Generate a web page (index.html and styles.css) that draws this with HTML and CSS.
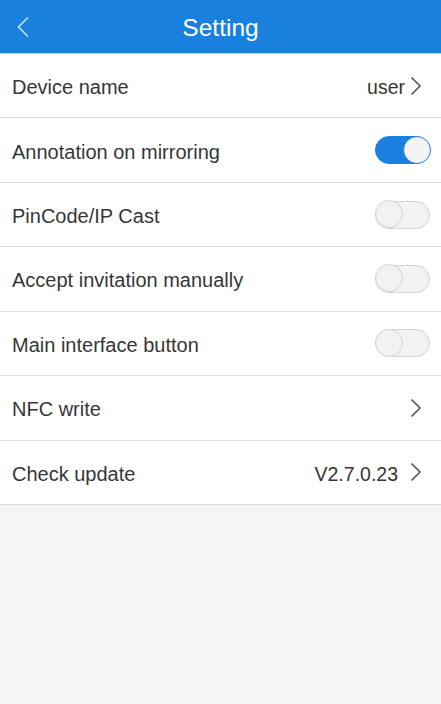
FILE: index.html
```html
<!DOCTYPE html>
<html>
<head>
<meta charset="utf-8">
<link rel="stylesheet" href="styles.css">
</head>
<body>
<div class="app">
  <header class="topbar">
    <svg class="back" width="14" height="22" viewBox="0 0 14 22"><path d="M12 1.5 L2.5 11 L12 20.5" fill="none" stroke="#cfe3f8" stroke-width="1.6"/></svg>
    <div class="title">Setting</div>
  </header>
  <div class="list">
    <div class="row"><span class="label">Device name</span><span class="right"><span class="value">user</span><svg class="chev" width="12" height="20" viewBox="0 0 12 20"><path d="M1.5 1.5 L10 10 L1.5 18.5" fill="none" stroke="#555" stroke-width="1.6"/></svg></span></div>
    <div class="row"><span class="label">Annotation on mirroring</span><span class="toggle on"><span class="knob"></span></span></div>
    <div class="row"><span class="label">PinCode/IP Cast</span><span class="toggle"><span class="knob"></span></span></div>
    <div class="row"><span class="label">Accept invitation manually</span><span class="toggle"><span class="knob"></span></span></div>
    <div class="row"><span class="label">Main interface button</span><span class="toggle"><span class="knob"></span></span></div>
    <div class="row"><span class="label">NFC write</span><span class="right"><svg class="chev" width="12" height="20" viewBox="0 0 12 20"><path d="M1.5 1.5 L10 10 L1.5 18.5" fill="none" stroke="#555" stroke-width="1.6"/></svg></span></div>
    <div class="row"><span class="label">Check update</span><span class="right"><span class="value ver">V2.7.0.23</span><svg class="chev" width="12" height="20" viewBox="0 0 12 20"><path d="M1.5 1.5 L10 10 L1.5 18.5" fill="none" stroke="#555" stroke-width="1.6"/></svg></span></div>
  </div>
</div>
</body>
</html>
```
FILE: styles.css
```css
* { box-sizing: border-box; }
html, body { margin: 0; padding: 0; }
body {
  background: #f5f5f5;
  font-family: "Liberation Sans", Arial, sans-serif;
  width: 441px;
  height: 704px;
  overflow: hidden;
}
.topbar {
  height: 54px;
  background: #1a80de;
  border-bottom: 1px solid #c9d6f0;
  position: relative;
  display: flex;
  align-items: center;
  justify-content: center;
}
.back {
  position: absolute;
  left: 16px;
  top: 16px;
}
.title {
  color: #fff;
  font-size: 24.5px;
  margin-top: 2px;
}
.list { background: #fff; }
.row {
  height: 64.43px;
  border-bottom: 1px solid #dcdcdc;
  display: flex;
  align-items: center;
  justify-content: space-between;
  padding: 0 11px 0 12px;
}
.label {
  font-size: 20px;
  color: #363636;
  padding-top: 4px;
}
.right {
  display: flex;
  align-items: center;
  gap: 5px;
}
.value {
  font-size: 19.5px;
  color: #363636;
  padding-top: 4px;
}
.value.ver { margin-right: 7px; }
.chev { display: block; margin-right: 8px; }
.toggle {
  width: 55px;
  height: 28px;
  border-radius: 14px;
  background: #f2f2f2;
  border: 1.5px solid #d2d2d2;
  position: relative;
}
.toggle .knob {
  position: absolute;
  top: -1.5px;
  left: -1.5px;
  width: 28px;
  height: 28px;
  border-radius: 50%;
  background: #f2f2f2;
  border: 1.5px solid #d2d2d2;
}
.toggle.on {
  background: #1b7fe0;
  border-color: #1b7fe0;
}
.toggle.on .knob {
  left: auto;
  right: -1.5px;
  background: #f4f4f4;
  border-color: #1b7fe0;
}
```
